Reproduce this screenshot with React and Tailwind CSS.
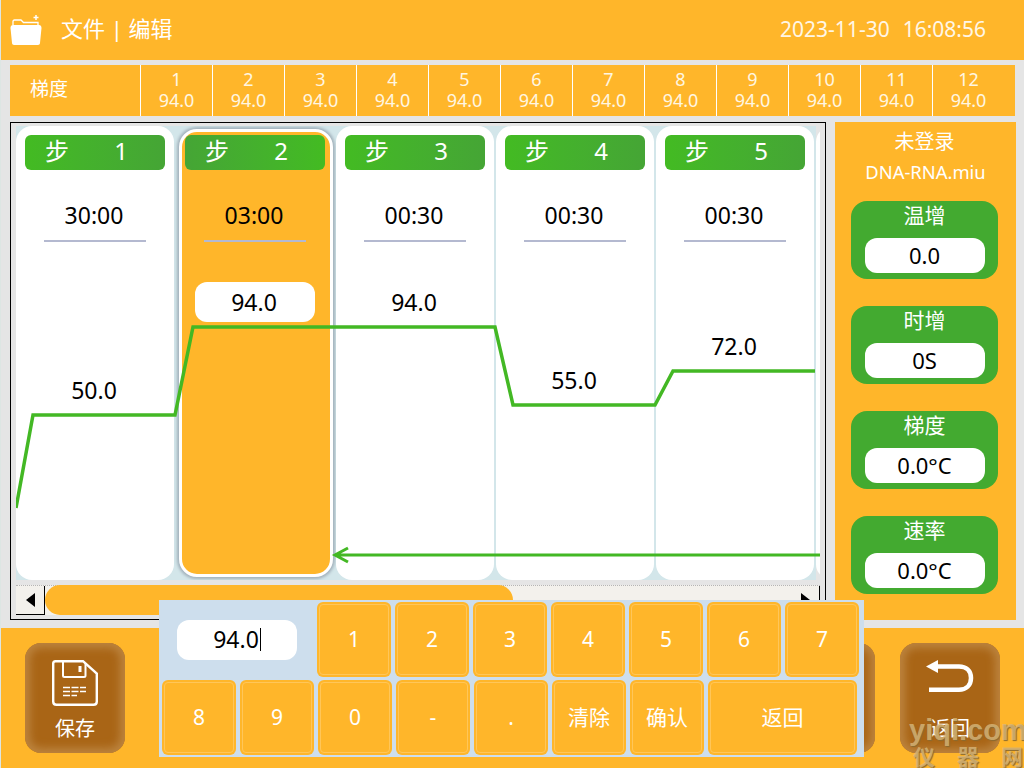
import React from 'react';

const FONT = "[font-family:'Noto_Sans','Noto_Sans_CJK_SC',sans-serif]";

const GRADIENT = [94, 94, 94, 94, 94, 94, 94, 94, 94, 94, 94, 94];

const STEPS = [
  { id: 1, time: '30:00', temp: 50 },
  { id: 2, time: '03:00', temp: 94, active: true },
  { id: 3, time: '00:30', temp: 94 },
  { id: 4, time: '00:30', temp: 55 },
  { id: 5, time: '00:30', temp: 72 },
  { id: 6, time: '', temp: null },
];

const SIDE = [
  { label: '温增', value: '0.0' },
  { label: '时增', value: '0S' },
  { label: '梯度', value: '0.0°C' },
  { label: '速率', value: '0.0°C' },
];

// y inside the step strip, the curve drops 2px per degree
const tempY = (t) => 388 - 2 * t;

const curve = () => {
  const pts = ['0,382'];
  STEPS.slice(0, 5).forEach((s, i) => {
    pts.push(`${i * 160 + 17},${tempY(s.temp) + 1}`);
    pts.push(`${i * 160 + 159},${tempY(s.temp) + 1}`);
  });
  return pts.join(' ');
};

const FolderIcon = () => (
  <svg width="32" height="30" viewBox="0 0 32 30" fill="none">
    <path d="M3 10V6.500C3 5.700 3.500 5 4.500 5H11L13.500 7.500H28V10" stroke="#fff" strokeWidth="1.300" />
    <path d="M0.500 13C0.500 11 1.500 10 3 10H29C30.500 10 31.500 11 31.500 13L30 28C30 29.300 29 30 28 30H4C3 30 2 29.300 2 28Z" fill="#fff" />
    <path d="M23.500 2.500H28.500M26 0V5" stroke="#fff" strokeWidth="1.500" />
  </svg>
);

const SaveIcon = () => (
  <svg width="46" height="46" viewBox="0 0 46 46" fill="none" stroke="#fff">
    <path d="M3.500 1.200H31L44.800 13.500V41.500C44.800 43.500 43.500 44.800 41.500 44.800H4.500C2.500 44.800 1.200 43.500 1.200 41.500V3.500C1.200 2.200 2.200 1.200 3.500 1.200Z" strokeWidth="2.400" />
    <path d="M11 1.500V15.500C11 16.500 11.500 17 12.500 17H32C33 17 33.500 16.500 33.500 15.500V3" strokeWidth="2" />
    <path d="M28 6V12" strokeWidth="3" />
    <path d="M11 27.500H34M11 31.500H34M11 35.500H25" strokeWidth="1.500" strokeDasharray="7 1.500" />
  </svg>
);

const ReturnIcon = () => (
  <svg width="48" height="34" viewBox="0 0 48 34" fill="none">
    <path d="M0 6.500L12 0V13Z" fill="#fff" />
    <path d="M10 6.500H33C40 6.500 45 10.500 45 18C45 25.500 40 29.800 33 29.800H3" stroke="#fff" strokeWidth="4.500" />
  </svg>
);

const StepCard = ({ step }) => {
  if (step.temp === null) {
    return <div className="w-[160px] shrink-0 rounded-2xl bg-white" />;
  }
  const card = step.active
    ? 'm-[3px] h-[448px] w-[154px] rounded-[18px] border-[3px] border-white bg-[#ffb62a] pl-[3px] pt-[3px] shadow-[0_0_3px_2px_#a3b2bc]'
    : 'mr-[2px] h-[454px] w-[158px] rounded-2xl bg-white pl-[9px] pt-[9px]';
  const badge = step.active
    ? 'bg-gradient-to-r from-[#45a535] to-[#43bb22]'
    : 'bg-gradient-to-r from-[#43bb22] to-[#45a535]';
  return (
    <div className="relative w-[160px] shrink-0 bg-[#d3e6ea]">
      <div className={card}>
        <div className={`flex h-[35px] w-[140px] items-center justify-between rounded-md pb-1 pl-5 pr-[37px] text-2xl leading-none text-white ${badge}`}>
          <span>步</span>
          <span>{step.id}</span>
        </div>
      </div>
      <div className="absolute left-0 top-[71px] flex w-[158px] flex-col items-center">
        <div className="pr-[2px] text-[23px] leading-[36px] text-black">{step.time}</div>
        <div className="mt-[7px] h-[2px] w-[102px] bg-[#b4b9d0]" />
      </div>
      <div
        className={`absolute left-[19px] flex h-10 w-[120px] items-center justify-center rounded-xl pr-[2px] text-[23px] text-black ${step.active ? 'bg-white' : ''}`}
        style={{ top: tempY(step.temp) - 44 }}
      >
        {step.temp.toFixed(1)}
      </div>
    </div>
  );
};

const Key = ({ label, wide }) => (
  <button className={`flex h-[75px] items-center justify-center rounded-md bg-[#ffb62a] text-[21px] text-white outline-[1.5px] outline-offset-[-3px] outline-[#ffc659] ${wide ? 'w-[149px]' : 'w-[74px]'}`}>
    {label}
  </button>
);

const BottomButton = ({ children, label }) => (
  <div className="flex h-[110px] w-[100px] flex-col items-center rounded-2xl bg-[#a96516] shadow-[inset_0_0_9px_5px_#bc843f]">
    <div className="flex h-[63px] items-end">{children}</div>
    {label && <div className="mt-2 text-xl leading-[30px] text-white">{label}</div>}
  </div>
);

export default function App() {
  return (
    <div className={`relative flex h-[768px] w-[1024px] flex-col overflow-hidden border-l border-[#dde6e3] bg-[#e5e5e5] ${FONT}`}>
      {/* Header */}
      <header className="flex h-[60px] shrink-0 items-center bg-[#ffb62a] pl-[9px] pr-[38px] text-white">
        <FolderIcon />
        <div className="ml-[19px] pb-[3px] text-[22px]">文件 | 编辑</div>
        <div className="ml-auto flex gap-[13px] text-[21px] text-[#fff6e6]">
          <span>2023-11-30</span>
          <span>16:08:56</span>
        </div>
      </header>

      {/* Gradient row */}
      <div className="ml-[9px] mt-[5px] flex h-[51px] w-[1005px] shrink-0 bg-[#ffb62a] text-white">
        <div className="flex w-[130px] items-center pb-[2px] pl-5 text-[19px]">梯度</div>
        {GRADIENT.map((v, i) => (
          <div key={i} className="flex w-[72px] flex-col items-center justify-center border-l border-white pb-px text-lg leading-[21px] text-[#fff6e2]">
            <span>{i + 1}</span>
            <span>{v.toFixed(1)}</span>
          </div>
        ))}
      </div>

      {/* Main */}
      <div className="ml-[9px] mt-[6px] flex h-[498px] shrink-0 gap-[9px]">
        <div className="flex w-[816px] flex-col border border-black px-[5px] pt-[3px]">
          <div className="relative flex h-[454px] shrink-0 overflow-hidden">
            {STEPS.map((s) => (
              <StepCard key={s.id} step={s} />
            ))}
            <svg className="absolute left-0 top-0" width="804" height="454" fill="none">
              <polyline points={curve()} stroke="#43b824" strokeWidth="3.500" />
              <path d="M804 429H320M332 422L319 429L332 436" stroke="#43b824" strokeWidth="3" />
            </svg>
          </div>
          <div className="mt-[5px] flex h-[30px] border-t border-dotted border-[#b5b5b5] bg-[#f3f1ec]">
            <div className="flex w-[29px] items-center justify-center border-b border-r border-black bg-[#f3f1ec]">
              <div className="h-0 w-0 border-y-[7px] border-r-[9px] border-y-transparent border-r-black" />
            </div>
            <div className="-mt-px h-[30px] w-[468px] rounded-[15px] bg-[#ffb62a]" />
            <div className="ml-auto flex w-[29px] items-center justify-center border-b border-r border-black">
              <div className="h-0 w-0 border-y-[7px] border-l-[9px] border-y-transparent border-l-black" />
            </div>
          </div>
        </div>

        <aside className="flex w-[181px] flex-col items-center bg-[#ffb62a] pr-[2px] pt-[7px] text-white">
          <div className="text-xl leading-[26px]">未登录</div>
          <div className="ml-[2px] mt-[4px] text-[18.400px] leading-[26px]">DNA-RNA.miu</div>
          <div className="mt-4 flex flex-col gap-[27px]">
            {SIDE.map((s) => (
              <div key={s.label} className="flex h-[78px] w-[147px] flex-col items-center rounded-2xl bg-[#43aa30]">
                <div className="text-[21px] leading-[28px]">{s.label}</div>
                <div className="mt-[9px] flex h-[35px] w-[120px] items-center justify-center rounded-xl bg-white text-[22px] text-black">
                  {s.value}
                </div>
              </div>
            ))}
          </div>
        </aside>
      </div>

      {/* Bottom buttons */}
      <div className="mt-2 flex h-[140px] shrink-0 items-start gap-[25px] bg-[#ffb62a] pl-6 pt-[15px]">
        <BottomButton label="保存">
          <SaveIcon />
        </BottomButton>
        <div className="flex-1" />
        <BottomButton />
        <div className="mr-6">
          <BottomButton label="返回">
            <div className="mb-3">
              <ReturnIcon />
            </div>
          </BottomButton>
        </div>
      </div>

      {/* Keypad */}
      <div className="absolute left-[158px] top-[600px] flex h-[157px] w-[705px] flex-col gap-[3px] bg-[#cddeed] pl-[3px] pt-[2px]">
        <div className="flex gap-1">
          <div className="flex w-[151px] items-center pl-[15px]">
            <div className="flex h-10 w-[120px] items-center justify-center rounded-xl bg-white text-[23px] text-black">
              94.0<span className="ml-px h-[23px] w-px bg-black" />
            </div>
          </div>
          {['1', '2', '3', '4', '5', '6', '7'].map((k) => (
            <Key key={k} label={k} />
          ))}
        </div>
        <div className="flex gap-1">
          {['8', '9', '0', '-', '.', '清除', '确认'].map((k) => (
            <Key key={k} label={k} />
          ))}
          <Key label="返回" wide />
        </div>
      </div>

      {/* Watermark */}
      <div className="absolute left-[908px] top-[714px] text-[29px] font-bold leading-[32px] text-[#d9b77a]/80 [font-family:'Liberation_Sans',sans-serif] [text-shadow:1px_1px_1px_#8a6a30]">
        yiqi.com
      </div>
      <div className="absolute left-[912px] top-[742px] flex gap-[22px] text-[22px] font-bold leading-[26px] text-[#d9b77a]/80 [font-family:'Noto_Sans_CJK_SC',sans-serif] [text-shadow:1px_1px_1px_#8a6a30]">
        <span>仪</span>
        <span>器</span>
        <span>网</span>
      </div>
    </div>
  );
}
